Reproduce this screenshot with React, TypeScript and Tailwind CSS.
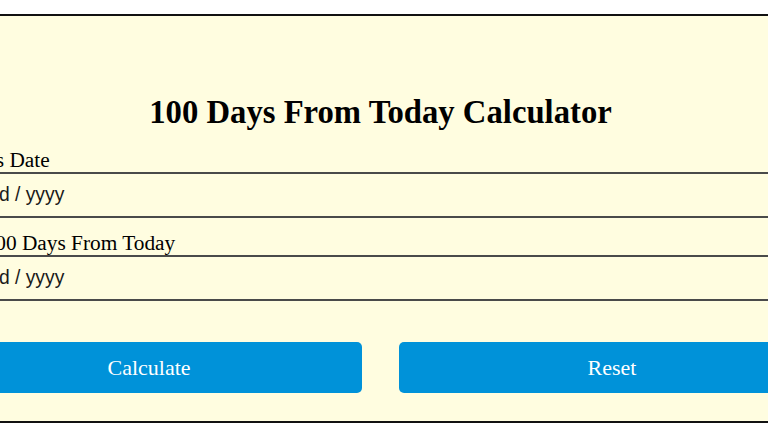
export default function App() {
  return (
    <div className="w-[768px] h-[432px] overflow-hidden bg-white">
      <div className="mt-[14px] ml-[-84px] w-[929px] h-[409px] border-2 border-[#111] bg-[#fffde0] px-[18px] pt-[78px] font-['Liberation_Serif',serif] text-black">
        <h1 className="text-center text-[32.7px] font-bold leading-[36px]">100 Days From Today Calculator</h1>
        <label className="mt-[19px] block pl-[3px] text-[21.33px] leading-[23px]">Today's Date</label>
        <input
          type="text"
          placeholder="mm / dd / yyyy"
          className="block h-[46px] w-full border-2 border-[#4a4a4a] bg-transparent pl-[2px] pr-[5px] font-['Liberation_Sans',sans-serif] text-[19.3px] text-[#1a1a1a] outline-none placeholder:text-[#1a1a1a]"
        />
        <label className="mt-[14px] block pl-[3px] text-[21.33px] leading-[23px]">Date 100 Days From Today</label>
        <input
          type="text"
          placeholder="mm / dd / yyyy"
          className="block h-[46px] w-full border-2 border-[#4a4a4a] bg-transparent pl-[2px] pr-[5px] font-['Liberation_Sans',sans-serif] text-[19.3px] text-[#1a1a1a] outline-none placeholder:text-[#1a1a1a]"
        />
        <div className="mt-[41px] grid grid-cols-2 gap-[37px]">
          <button className="h-[51px] rounded-[5px] bg-[#0092d9] text-[22px] text-white">Calculate</button>
          <button className="h-[51px] rounded-[5px] bg-[#0092d9] text-[22px] text-white">Reset</button>
        </div>
      </div>
    </div>
  );
}
